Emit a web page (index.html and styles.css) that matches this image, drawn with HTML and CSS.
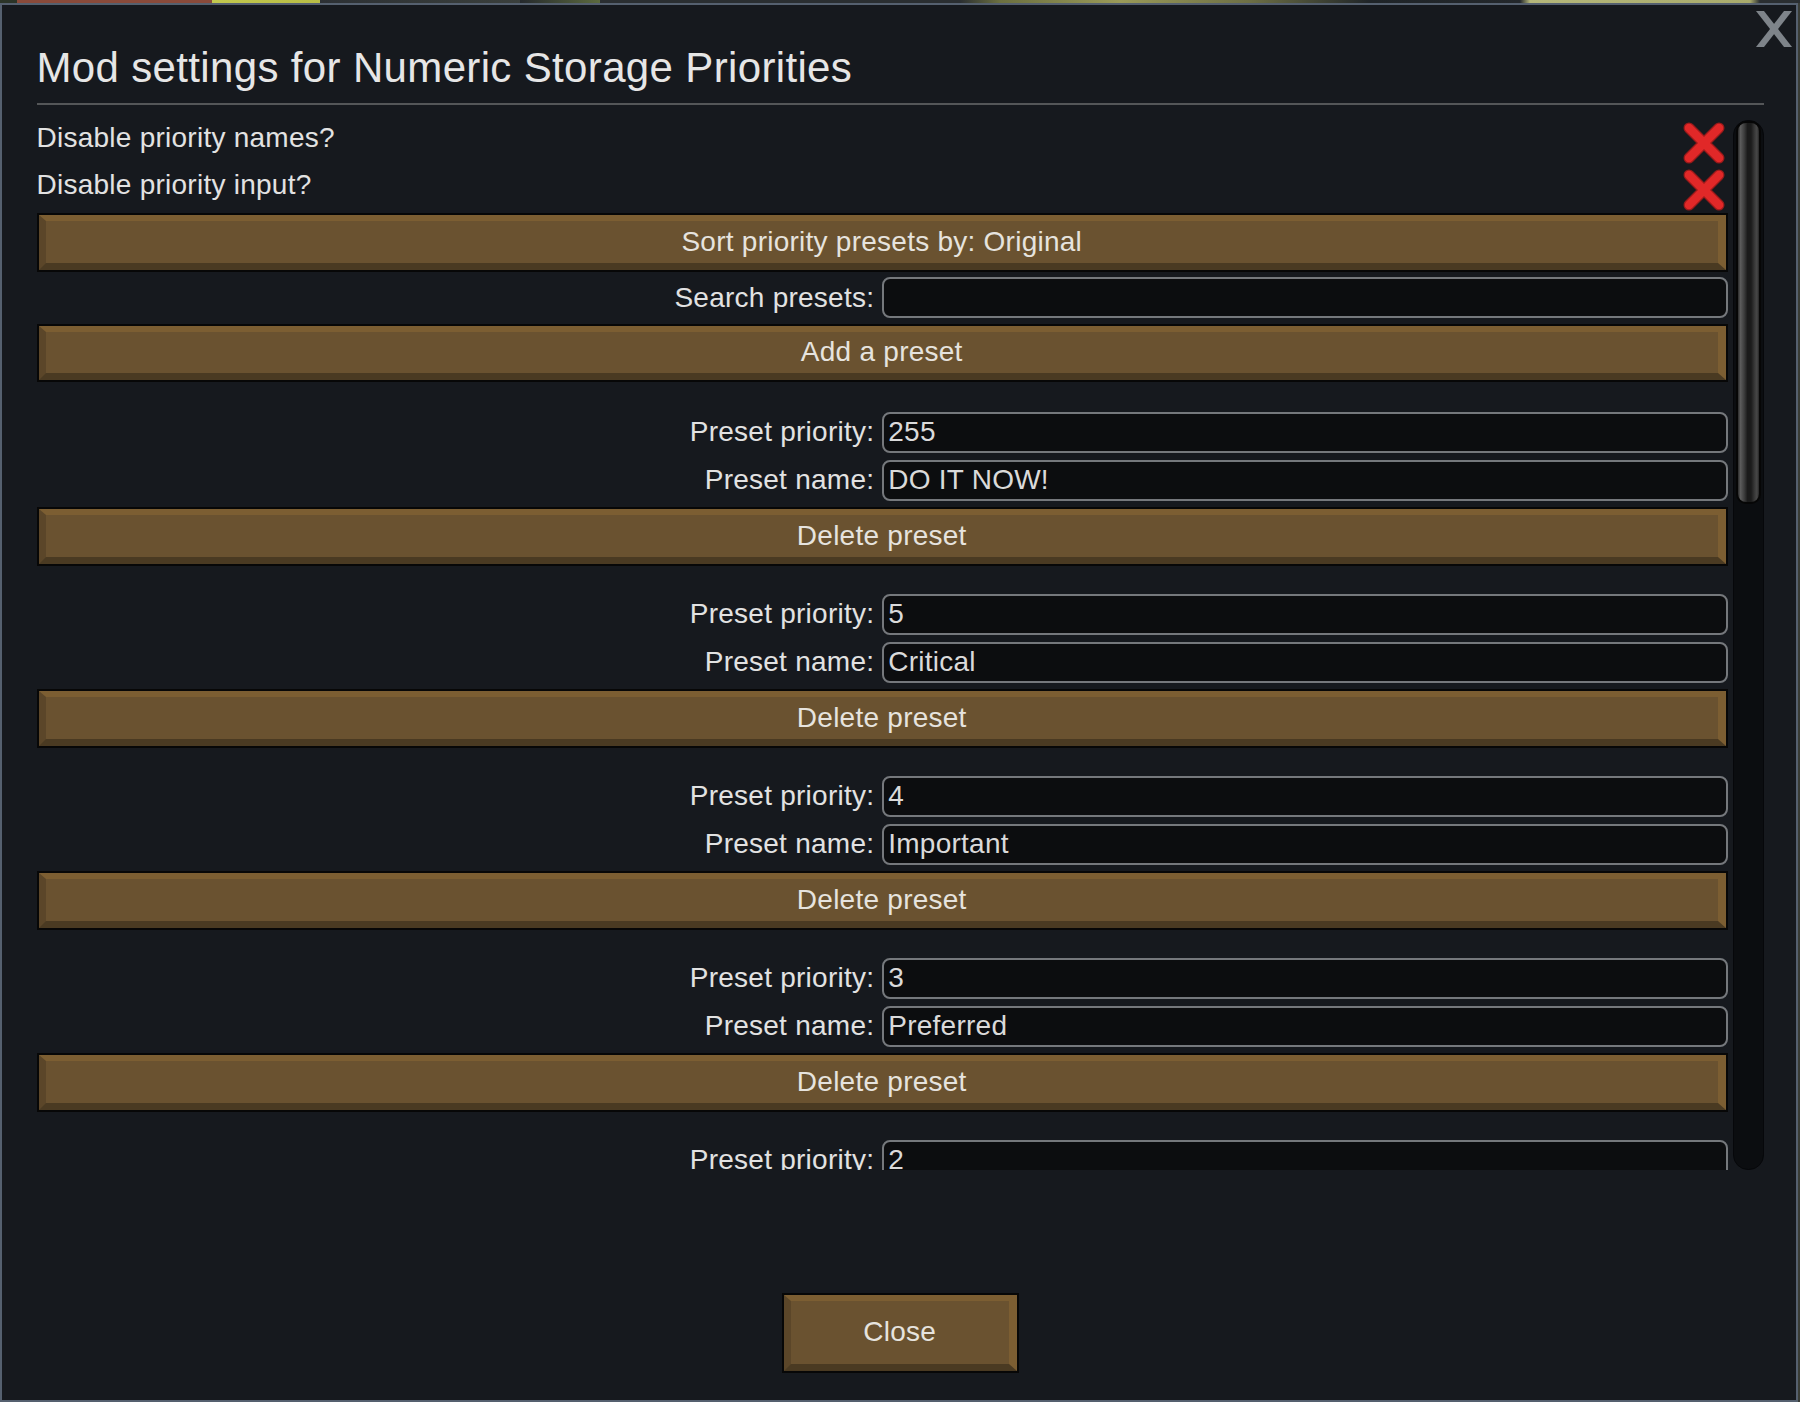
FILE: index.html
```html
<!DOCTYPE html>
<html lang="en">
<head>
<meta charset="utf-8">
<title>Mod settings</title>
<link rel="stylesheet" href="styles.css">
</head>
<body>
<div class="window">
  <button class="win-close" aria-label="Close window">
    <svg width="36" height="36" viewBox="0 0 36 36"><polygon points="0,0 8,0 36,36 28,36" fill="#7e848a"/><polygon points="28,0 36,0 8,36 0,36" fill="#7e848a"/></svg>
  </button>
  <h1 class="title">Mod settings for Numeric Storage Priorities</h1>
  <div class="sep"></div>
  <div class="scroll">
    <div class="list">
      <div class="check-row row-a">
        <span class="label">Disable priority names?</span>
        <svg class="cross" width="42" height="42" viewBox="0 0 42 42"><path d="M6 6 L36 36 M36 6 L6 36" stroke="#9a1a1a" stroke-width="11" stroke-linecap="round" fill="none"/><path d="M6 6 L36 36 M36 6 L6 36" stroke="#e12828" stroke-width="8.5" stroke-linecap="round" fill="none"/></svg>
      </div>
      <div class="check-row row-b">
        <span class="label">Disable priority input?</span>
        <svg class="cross" width="42" height="42" viewBox="0 0 42 42"><path d="M6 6 L36 36 M36 6 L6 36" stroke="#9a1a1a" stroke-width="11" stroke-linecap="round" fill="none"/><path d="M6 6 L36 36 M36 6 L6 36" stroke="#e12828" stroke-width="8.5" stroke-linecap="round" fill="none"/></svg>
      </div>
      <div class="btn btn-sort"><span class="bevel">Sort priority presets by: Original</span></div>
      <div class="field-row row-search">
        <span class="field-label">Search presets:</span>
        <span class="field"></span>
      </div>
      <div class="btn btn-add"><span class="bevel">Add a preset</span></div>

      <div class="preset">
        <div class="field-row row-prio"><span class="field-label">Preset priority:</span><span class="field">255</span></div>
        <div class="field-row row-name"><span class="field-label">Preset name:</span><span class="field">DO IT NOW!</span></div>
        <div class="btn btn-del"><span class="bevel">Delete preset</span></div>
      </div>
      <div class="preset">
        <div class="field-row row-prio"><span class="field-label">Preset priority:</span><span class="field">5</span></div>
        <div class="field-row row-name"><span class="field-label">Preset name:</span><span class="field">Critical</span></div>
        <div class="btn btn-del"><span class="bevel">Delete preset</span></div>
      </div>
      <div class="preset">
        <div class="field-row row-prio"><span class="field-label">Preset priority:</span><span class="field">4</span></div>
        <div class="field-row row-name"><span class="field-label">Preset name:</span><span class="field">Important</span></div>
        <div class="btn btn-del"><span class="bevel">Delete preset</span></div>
      </div>
      <div class="preset">
        <div class="field-row row-prio"><span class="field-label">Preset priority:</span><span class="field">3</span></div>
        <div class="field-row row-name"><span class="field-label">Preset name:</span><span class="field">Preferred</span></div>
        <div class="btn btn-del"><span class="bevel">Delete preset</span></div>
      </div>
      <div class="preset">
        <div class="field-row row-prio"><span class="field-label">Preset priority:</span><span class="field">2</span></div>
      </div>
    </div>
    <div class="scrollbar"><div class="thumb"></div></div>
  </div>
  <div class="footer">
    <div class="btn btn-close"><span class="bevel">Close</span></div>
  </div>
</div>
</body>
</html>
```

FILE: styles.css
```css
* { box-sizing: border-box; }

html, body {
  margin: 0;
  width: 1800px;
  height: 1402px;
  overflow: hidden;
}

body {
  padding-top: 3px;
  font-family: "Liberation Sans", Arial, sans-serif;
  color: #e2e2e2;
  background-color: #3a3d36;
  background-image:
    linear-gradient(to right,
      #2b3428 0, #2b3428 17px,
      #8a4a3a 17px, #8a4a3a 212px,
      #c2c84e 212px, #b8bd45 320px,
      #2c3034 320px, #3a3f3c 520px,
      #25292d 520px, #5c6a3e 600px,
      #2a2e31 600px, #2a2e31 960px,
      #6c7040 1000px, #9a9a58 1120px,
      #6d6f45 1250px, #1f2428 1370px,
      #23272b 1520px, #b5b77a 1530px,
      #a9ab6c 1750px, #2a2e31 1760px);
  background-size: 100% 3px;
  background-repeat: no-repeat;
}

.window {
  position: relative;
  width: 1798px;
  height: 1399px;
  background: #16191e;
  border: 2px solid #55606f;
  padding: 0 32px 0 34.5px;
}

.win-close {
  position: absolute;
  top: 6px;
  right: 4px;
  width: 36px;
  height: 36px;
  padding: 0;
  border: 0;
  background: none;
}
.win-close svg { display: block; }

.title {
  margin: 0;
  padding-top: 38px;
  font-size: 42px;
  line-height: 50px;
  font-weight: normal;
  color: #e6e6e6;
  letter-spacing: 0.35px;
  white-space: nowrap;
}

.sep {
  margin-top: 9.5px;
  height: 2px;
  background: #545658;
}

.scroll {
  margin-top: 15.5px;
  height: 1050px;
  display: flex;
  gap: 5px;
  overflow: hidden;
}

.list {
  flex: 1;
  min-width: 0;
  font-size: 28px;
  letter-spacing: 0.25px;
}

.check-row {
  height: 46.7px;
  display: flex;
  justify-content: space-between;
  align-items: center;
  padding-right: 3px;
}
.check-row .label {
  align-self: flex-start;
  line-height: 36px;
}
.cross { display: block; }

.btn {
  border: 2px solid #070707;
}
.bevel {
  display: flex;
  align-items: center;
  justify-content: center;
  height: 100%;
  background: #6a5230;
  border-style: solid;
  border-width: 6px 8px 7px 7px;
  border-color: #7c5e32 #7c5e32 #4a3a22 #5b4629;
  color: #e6e3de;
  font-size: 28px;
  line-height: 1;
  letter-spacing: 0.25px;
  padding-bottom: 1px;
}

.btn-sort { height: 59px; margin-bottom: 5px; }
.btn-add { height: 58px; margin-bottom: 29.5px; }
.btn-del { height: 59px; }

.field-row {
  display: grid;
  grid-template-columns: 1fr 1fr;
  align-items: center;
  height: 41px;
}
.row-search { margin-bottom: 6px; }
.row-prio { margin-bottom: 7px; }
.row-name { margin-bottom: 6.5px; }

.field-label {
  text-align: right;
  padding-right: 8px;
  line-height: 36px;
  white-space: nowrap;
}

.field {
  display: flex;
  align-items: center;
  height: 41px;
  padding: 0 5px 0 4px;
  background: #0c0d0f;
  border: 2px solid #75787c;
  border-radius: 8px;
  color: #dadada;
  line-height: 36px;
  white-space: nowrap;
}

.preset { margin-bottom: 27.5px; }

.scrollbar {
  width: 31px;
  height: 100%;
  flex: none;
  background: #0b0d10;
  border: 1px solid #06070a;
  border-radius: 15px;
  padding: 0 2px;
}
.thumb {
  height: 383px;
  border: 2px solid #060606;
  border-radius: 10px;
  background: linear-gradient(to right, #2a2a2a 0, #5c5c5c 12%, #3c3c3c 30%, #1b1b1b 45%, #1b1b1b 62%, #3a3a3a 80%, #484848 90%, #262626 100%);
}

.footer {
  padding-top: 123px;
}
.btn-close {
  width: 237px;
  height: 80px;
  margin: 0 auto;
}
```
